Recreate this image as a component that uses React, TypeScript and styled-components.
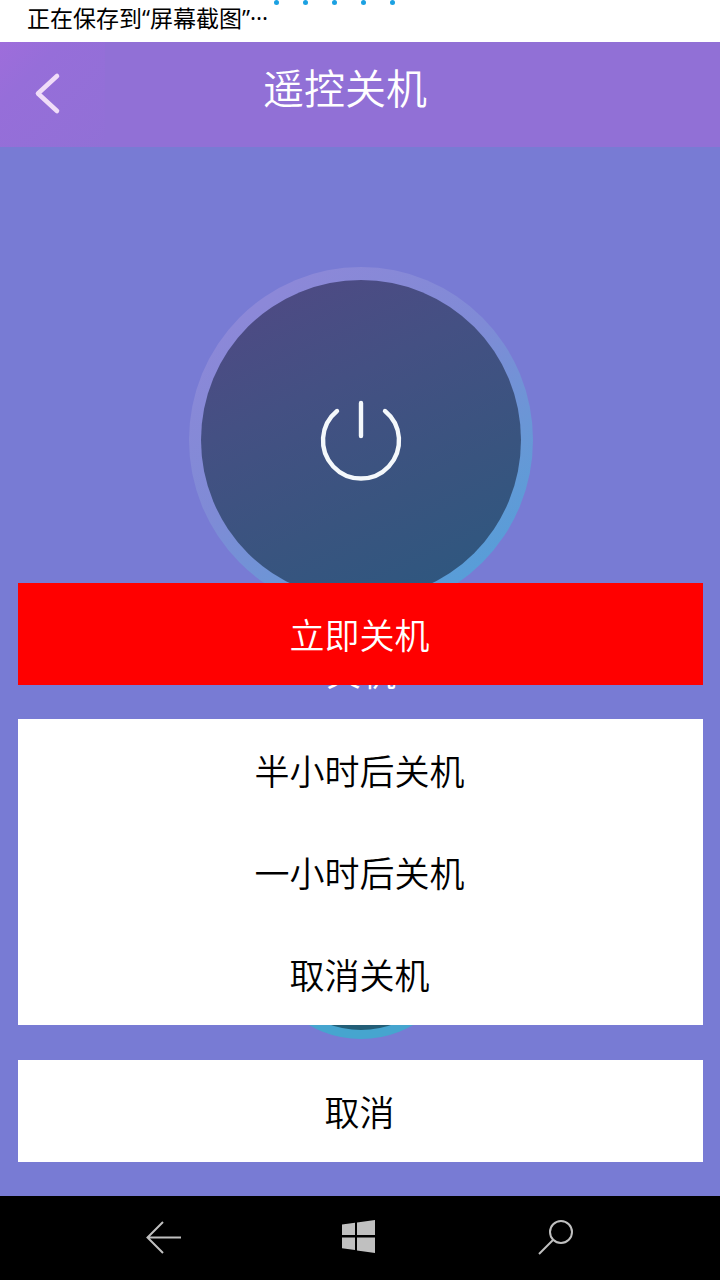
import React from "react";
import styled, { createGlobalStyle } from "styled-components";

const GlobalStyle = createGlobalStyle`
  * { box-sizing: border-box; }
  body {
    margin: 0;
    font-family: "Open Sans", "Noto Sans CJK SC", sans-serif;
    font-weight: 350;
  }
  button {
    border: 0;
    margin: 0;
    padding: 0;
    background: none;
    font: inherit;
    color: inherit;
    cursor: pointer;
  }
`;

const Screen = styled.div`
  display: flex;
  flex-direction: column;
  min-height: 100vh;
  background: #787bd4;
`;

const StatusBar = styled.div`
  position: relative;
  height: 42px;
  padding: 0 27px;
  background: #fff;
  color: #000;
  font-size: 23px;
  font-weight: 400;
  line-height: 36px;
  white-space: nowrap;
`;

const Progress = styled.div`
  position: absolute;
  top: 0;
  left: 38%;
  display: flex;
  gap: 24px;
`;

const Dot = styled.span`
  width: 5px;
  height: 5px;
  border-radius: 50%;
  background: #1ba1e2;
`;

const Header = styled.header`
  display: grid;
  grid-template-columns: 105px 1fr 135px;
  height: 105px;
  background: #9170d6;
  color: #fff;
`;

const BackButton = styled.button`
  display: flex;
  align-items: center;
  padding-left: 30px;
  background: linear-gradient(135deg, #9e6ddb 0%, #966ed9 30%, #9170d6 100%);
`;

const Title = styled.h1`
  margin: 0;
  font-size: 41px;
  font-weight: 350;
  line-height: 92px;
  text-align: center;
`;

const Main = styled.main`
  position: relative;
  flex: 1;
  display: flex;
  flex-direction: column;
  align-items: center;
  padding: 120px 0 156px 2px;
  color: #fff;
`;

const PowerButton = styled.button`
  display: grid;
  place-items: center;
  width: 344px;
  height: 346px;
  border-radius: 50%;
  background: linear-gradient(145deg, #8c88d8 15%, #7f8bd6 45%, #6798d6 70%, #4aa2da 100%);
`;

const PowerFace = styled.span`
  display: grid;
  place-items: center;
  width: 320px;
  height: 320px;
  border-radius: 50%;
  background: linear-gradient(155deg, #4e4a84 8%, #445083 35%, #39547f 65%, #2b587f 100%);
`;

const PowerLabel = styled.p`
  margin: 40px 0 138px;
  font-size: 35px;
  line-height: 40px;
`;

const SecondaryDial = styled.div`
  width: 208px;
  height: 208px;
  border: 9px solid #46a5cf;
  border-radius: 50%;
  background: #235e77;
`;

const Sheet = styled.div`
  position: absolute;
  right: 0;
  bottom: 0;
  left: 0;
  display: flex;
  flex-direction: column;
  gap: 34px;
  padding: 0 17px 34px 18px;
`;

const ActionGroup = styled.div`
  display: flex;
  flex-direction: column;
  margin-bottom: 1px;
  background: #fff;
`;

const Action = styled.button<{ $danger?: boolean }>`
  height: 102px;
  padding: 4px 2px 0 0;
  background: ${(p) => (p.$danger ? "#f00" : "#fff")};
  color: ${(p) => (p.$danger ? "#fff" : "#000")};
  font-size: 35px;
  line-height: 40px;
`;

const NavBar = styled.nav`
  display: flex;
  height: 84px;
  padding: 0 66px;
  background: #000;
`;

const NavButton = styled.button`
  flex: 1;
  display: grid;
  place-items: center;
`;

const DOTS = [0, 1, 2, 3, 4];

export default function App() {
  return (
    <>
      <GlobalStyle />
      <Screen>
        <StatusBar>
          正在保存到“屏幕截图”···
          <Progress>
            {DOTS.map((d) => (
              <Dot key={d} />
            ))}
          </Progress>
        </StatusBar>
        <Header>
          <BackButton aria-label="返回">
            <svg width="36" height="48" viewBox="0 0 36 48" fill="none" stroke="#f0dcf8" strokeWidth="4.600" strokeLinecap="round" strokeLinejoin="round">
              <path d="M27 5 8 22.500 27 40" />
            </svg>
          </BackButton>
          <Title>遥控关机</Title>
        </Header>
        <Main>
          <PowerButton aria-label="关机">
            <PowerFace>
              <svg width="84" height="84" viewBox="0 0 84 84" fill="none" stroke="#f4f8fb" strokeWidth="4.400" strokeLinecap="round">
                <path d="M42 5V38M18 13A38 38 0 1 0 66 13" />
              </svg>
            </PowerFace>
          </PowerButton>
          <PowerLabel>关机</PowerLabel>
          <SecondaryDial />
          <Sheet>
            <Action $danger>立即关机</Action>
            <ActionGroup>
              <Action>半小时后关机</Action>
              <Action>一小时后关机</Action>
              <Action>取消关机</Action>
            </ActionGroup>
            <Action>取消</Action>
          </Sheet>
        </Main>
        <NavBar>
          <NavButton aria-label="后退">
            <svg width="36" height="36" viewBox="0 0 36 36" fill="none" stroke="#c0c0c0" strokeWidth="2">
              <path d="M35 17.500H1M17 2 1.500 17.500 17 33" />
            </svg>
          </NavButton>
          <NavButton aria-label="开始">
            <svg width="36" height="36" viewBox="0 0 36 36" fill="#c0c0c0">
              <path d="M0 4.500 13 2.800V15H0ZM15 2.500 33 0V15H15ZM0 17.500H13V30L0 28.300ZM15 17.500H33V33L15 30.500Z" />
            </svg>
          </NavButton>
          <NavButton aria-label="搜索">
            <svg width="36" height="36" viewBox="0 0 36 36" fill="none" stroke="#c0c0c0" strokeWidth="2">
              <circle cx="23" cy="12" r="11" />
              <path d="M15 20 1 34" />
            </svg>
          </NavButton>
        </NavBar>
      </Screen>
    </>
  );
}
